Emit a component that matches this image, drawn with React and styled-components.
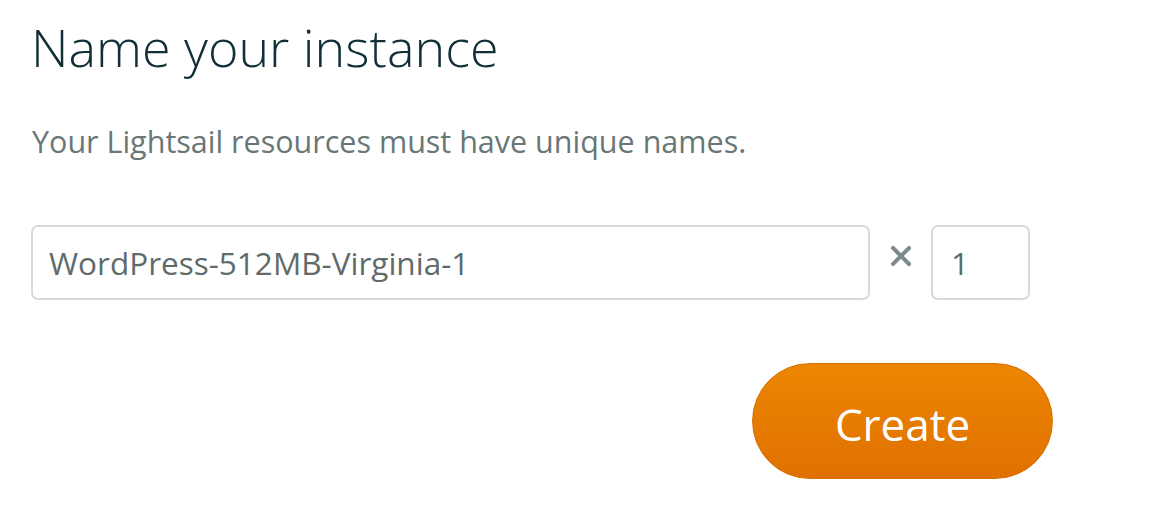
import styled, { createGlobalStyle } from 'styled-components'

const GlobalStyle = createGlobalStyle`
  body {
    margin: 0;
    background: #ffffff;
    font-family: 'Open Sans', 'Noto Sans', sans-serif;
  }
`

const Panel = styled('section')`
  display: flex;
  flex-direction: column;
  padding: 16px 0 0 31px;
  width: 1022px;
`

const Title = styled('h1')`
  margin: 0;
  font-weight: 300;
  font-size: 52px;
  line-height: 62px;
  color: #102f37;
`

const Hint = styled('p')`
  margin: 44px 0 0 1px;
  font-size: 30.5px;
  font-weight: 500;
  line-height: 38px;
  color: #687776;
`

const Row = styled('div')`
  display: flex;
  align-items: center;
  margin-top: 65px;
`

const Field = styled('div')`
  box-sizing: border-box;
  display: flex;
  align-items: center;
  height: 75px;
  width: ${({ width }) => width}px;
  padding-left: ${({ pad }) => pad}px;
  border: 2px solid #d5dbdb;
  border-radius: 7px;
  font-size: 31.5px;
  font-weight: 500;
  color: #5f6b6b;
`

const Times = styled('span')`
  display: flex;
  justify-content: center;
  width: 61px;
  margin-top: -14px;

  svg {
    width: 20px;
    height: 20px;
  }
`

const Actions = styled('div')`
  display: flex;
  justify-content: flex-end;
  margin-top: 63px;
`

const CreateButton = styled('button')`
  width: 301px;
  height: 116px;
  padding: 5px 0 0;
  border-radius: 58px;
  border: 1px solid #d87000;
  background: linear-gradient(180deg, #ec8602 0%, #e07000 100%);
  color: #ffffff;
  font-family: 'Open Sans', 'Noto Sans', sans-serif;
  font-size: 44px;
  font-weight: 400;
  cursor: pointer;
`

export default function App() {
  return (
    <>
      <GlobalStyle />
      <Panel>
        <Title>Name your instance</Title>
        <Hint>Your Lightsail resources must have unique names.</Hint>
        <Row>
          <Field width={839} pad={16}>WordPress-512MB-Virginia-1</Field>
          <Times>
            <svg viewBox="0 0 20 20">
              <path d="M2 2 L18 18 M18 2 L2 18" stroke="#7d8a8a" strokeWidth="4" strokeLinecap="square" />
            </svg>
          </Times>
          <Field width={99} pad={18}>1</Field>
        </Row>
        <Actions>
          <CreateButton>Create</CreateButton>
        </Actions>
      </Panel>
    </>
  )
}
